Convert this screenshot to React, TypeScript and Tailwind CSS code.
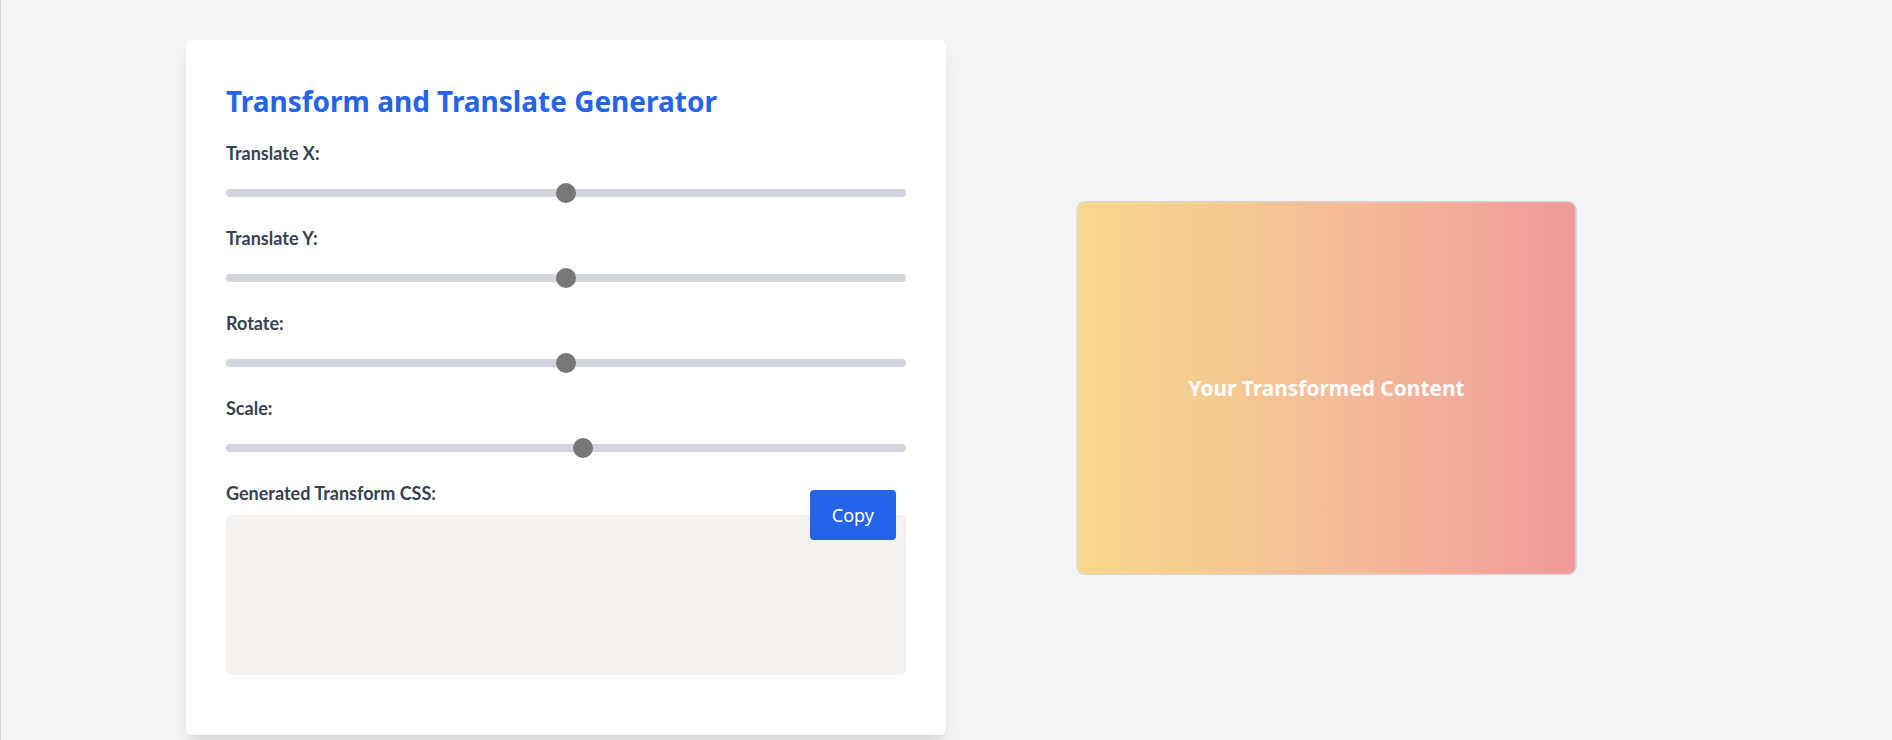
import { useState } from 'react';

const sliderCls =
  'block w-full h-2 appearance-none rounded-full bg-[#d1d5db] outline-none cursor-pointer [&::-webkit-slider-thumb]:appearance-none [&::-webkit-slider-thumb]:h-5 [&::-webkit-slider-thumb]:w-5 [&::-webkit-slider-thumb]:rounded-full [&::-webkit-slider-thumb]:bg-[#777777]';

function Slider(props: {
  label: string;
  min: number;
  max: number;
  step: number;
  value: number;
  onChange: (v: number) => void;
}) {
  return (
    <div className="mb-[27px]">
      <label className="block mb-[22px] text-lg leading-7 font-bold text-[#374151]">{props.label}</label>
      <input
        type="range"
        min={props.min}
        max={props.max}
        step={props.step}
        value={props.value}
        onChange={(e) => props.onChange(Number(e.target.value))}
        className={sliderCls}
      />
    </div>
  );
}

export default function App() {
  const [tx, setTx] = useState(0);
  const [ty, setTy] = useState(0);
  const [rot, setRot] = useState(0);
  const [scale, setScale] = useState(1.1);
  const [css, setCss] = useState('');

  const transform = `translate(${tx}px, ${ty}px) rotate(${rot}deg) scale(${scale})`;

  return (
    <div
      className="min-h-screen bg-[#f3f4f6] shadow-[inset_1px_0_0_#d1d5db] flex justify-center py-10"
      style={{ fontFamily: 'Lato, "Noto Sans", sans-serif' }}
    >
      <div className="w-[1520px] grid grid-cols-2 items-center">
        {/* controls */}
        <div className="bg-white rounded-md shadow-lg p-10">
          <h1 className="mt-[3px] mb-5 font-['Noto_Sans',sans-serif] text-[28px] leading-9 font-bold text-[#2563eb]">
            Transform and Translate Generator
          </h1>
          <Slider label="Translate X:" min={-200} max={200} step={1} value={tx} onChange={setTx} />
          <Slider label="Translate Y:" min={-200} max={200} step={1} value={ty} onChange={setTy} />
          <Slider label="Rotate:" min={-180} max={180} step={1} value={rot} onChange={setRot} />
          <Slider label="Scale:" min={0.1} max={2} step={0.1} value={scale} onChange={setScale} />

          <div className="relative mb-5">
            <label className="block mb-2 text-lg leading-7 font-bold text-[#374151]">
              Generated Transform CSS:
            </label>
            <textarea
              readOnly
              value={css}
              className="block w-full h-40 resize-none rounded-md bg-[#f4f1ee] p-3 font-mono text-sm text-gray-800 outline-none"
            />
            <button
              onClick={() => {
                setCss(`transform: ${transform};`);
                navigator.clipboard?.writeText(`transform: ${transform};`);
              }}
              className="absolute top-[11px] right-2.5 rounded bg-[#2563eb] px-[22px] py-[11px] font-['Noto_Sans',sans-serif] text-lg leading-7 text-white hover:bg-[#1d4ed8]"
            >
              Copy
            </button>
          </div>
        </div>

        {/* preview */}
        <div className="flex items-center justify-center">
          <div
            className="w-[455px] h-[340px] flex items-center justify-center rounded-lg border border-[#d1d5db] bg-gradient-to-r from-[#f7d98b] via-[#f4bd96] to-[#f09a9b]"
            style={{ transform }}
          >
            <span className="font-['Noto_Sans',sans-serif] text-[19px] font-bold text-white">
              Your Transformed Content
            </span>
          </div>
        </div>
      </div>
    </div>
  );
}
